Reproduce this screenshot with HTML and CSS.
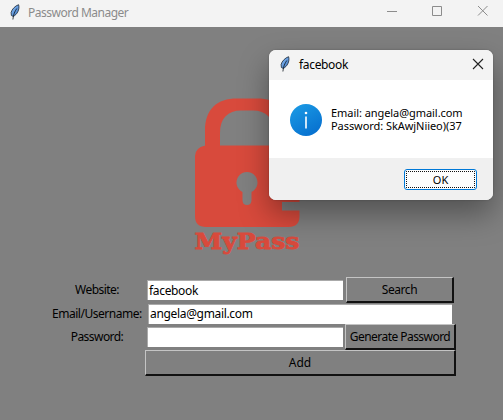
FILE: index.html
```html
<!DOCTYPE html>
<html lang="en">
<head>
<meta charset="utf-8">
<title>Password Manager</title>
<link rel="stylesheet" href="styles.css">
</head>
<body>
<svg class="defs" width="0" height="0">
  <defs>
    <linearGradient id="vane" x1="0" y1="0" x2="1" y2="1"><stop offset="0" stop-color="#8dc0f8"/><stop offset="1" stop-color="#3f78c4"/></linearGradient>
    <linearGradient id="blue" x1="0" y1="0" x2="0.6" y2="1"><stop offset="0" stop-color="#1c9de6"/><stop offset="1" stop-color="#0872d0"/></linearGradient>
    <symbol id="feather" viewBox="0 0 10 16">
      <path d="M8.600.7C5.200 1.800 1.800 5.300 1.100 8.500L1.400 11.500l1.900.9C7 10.600 10 5.500 8.600.7Z" fill="url(#vane)" stroke="#1c2836" stroke-width=".8"/>
      <path d="M6.800 4.500C4.800 7.500 3.400 10 2.900 15.500" fill="none" stroke="#101820" stroke-width=".8"/>
    </symbol>
  </defs>
</svg>
<div class="window">
  <header class="titlebar">
    <svg class="feather"><use href="#feather"/></svg>
    <span class="title"><span>Password Manager</span></span>
    <svg class="controls" width="104" height="14" viewBox="0 0 104 14" fill="none" stroke="#8c8c8c">
      <path d="M2 6.500h10M47.500 1.500h9v9h-9zM93 1l9.500 9.500M102.500 1l-9.500 9.500"/>
    </svg>
  </header>
  <main class="content">
    <svg class="logo" width="110" height="162" viewBox="192 96 110 162">
      <path fill="#d84a3c" fill-rule="evenodd" d="M205 147V131C205 109 217 98.500 237 98.500H257C277 98.500 289 109 289 131V145.500C296 146 299.500 150 299.500 156V202H282V210.500H299.500V216Q299.500 227 288.500 227H206Q195 227 195 216V156Q195 148 205 145.500ZM220 145.500H274V133C274 118 266 110.500 253 110.500H241C228 110.500 220 118 220 133ZM242.500 192V200Q242.500 205 247 205T251.500 200V192A10.500 10.500 0 1 0 242.500 192Z"/>
      <text class="brand" x="194.500" y="248.500" textLength="105" lengthAdjust="spacingAndGlyphs">MyPass</text>
    </svg>
    <form class="form">
      <div class="row"><label><span class="w-site">Website:</span></label><div class="entry"><span>facebook</span></div><div class="button search"><span>Search</span></div></div>
      <div class="row email"><label><span class="w-mail">Email/Username:</span></label><div class="entry wide"><span>angela@gmail.com</span></div></div>
      <div class="row"><label><span class="w-pass">Password:</span></label><div class="entry"></div><div class="button generate"><span>Generate Password</span></div></div>
      <div class="row"><label></label><div class="button add"><span>Add</span></div></div>
    </form>
  </main>
</div>
<section class="dialog">
  <header class="dialog-title">
    <svg class="feather"><use href="#feather"/></svg>
    <span class="title">facebook</span>
    <svg class="close" width="12" height="12" viewBox="0 0 12 12" stroke="#222" stroke-width="1.1"><path d="M1 1l10 10M11 1L1 11"/></svg>
  </header>
  <div class="dialog-body">
    <svg width="32" height="32" viewBox="0 0 32 32"><circle cx="16" cy="16" r="16" fill="url(#blue)"/><circle cx="16" cy="9" r="1.300" fill="#fff"/><path d="M16 12.500V24.500" stroke="#fff" stroke-width="1.600"/></svg>
    <p><span class="line-mail">Email: angela@gmail.com</span><br><span class="line-pass">Password: SkAwjNiieo)(37</span></p>
  </div>
  <footer class="dialog-footer"><div class="ok"><span>OK</span></div></footer>
</section>
</body>
</html>
```
FILE: styles.css
```css
* { box-sizing: border-box; }
body { margin: 0; width: 503px; height: 420px; overflow: hidden; font: 12px "Noto Sans", sans-serif; color: #000; }
.defs { position: absolute; }
.window { width: 503px; height: 420px; display: flex; flex-direction: column; background: #808080; }
.titlebar { height: 27px; flex: none; background: #f3f3f3; display: flex; align-items: center; padding: 0 14px 3px 10px; color: #8b8b8b; }
.feather { width: 10px; height: 16px; flex: none; }
.titlebar .title { margin-left: 8px; flex: 1; letter-spacing: -.5px; }
.content { flex: 1; display: flex; flex-direction: column; padding-top: 69px; }
.logo { display: block; margin-left: 192px; flex: none; }
.brand { font: bold 23px "DejaVu Serif", serif; fill: #d84a3c; stroke: #d84a3c; stroke-width: .8px; }
.form { margin: 19px 0 0 49px; width: 407px; }
.row { display: flex; height: 26px; align-items: center; }
.row.email { height: 21px; }
.row label { width: 96px; flex: none; text-align: center; white-space: nowrap; padding-bottom: 1px; letter-spacing: -.55px; }
.row.email label { text-align: left; padding-left: 3px; letter-spacing: -.47px; }
.entry { width: 196px; height: 20px; margin-left: 2px; background: #fff; border: 1px solid #aaa; border-width: 1px 0 0 1px; display: flex; align-items: center; padding: 0 0 1px 1px; white-space: nowrap; letter-spacing: -.33px; }
.entry.wide { width: 304px; margin-left: 3px; }
.button { height: 26px; display: flex; align-items: center; justify-content: center; border: solid; border-width: 1px 2px 2px 1px; border-color: #c4c4c4 #111 #111 #c4c4c4; white-space: nowrap; letter-spacing: -.55px; }
.search { width: 108px; margin-left: 3px; letter-spacing: -.45px; }
.generate { width: 111px; margin-left: 2px; }
.add { width: 311px; letter-spacing: 0; }
.dialog { position: absolute; left: 269px; top: 50px; width: 224px; height: 150px; border-radius: 7px; overflow: hidden; background: #fff; box-shadow: 0 14px 30px rgba(0,0,0,.36), 0 0 2px rgba(0,0,0,.25); }
.dialog-title { height: 30px; background: #f3f3f3; display: flex; align-items: center; padding: 0 9px 2px 11px; }
.dialog-title .title { margin-left: 9px; flex: 1; letter-spacing: -.33px; }
.dialog-body { height: 78px; display: flex; align-items: center; padding: 1px 0 0 21px; gap: 9px; }
.dialog-body p { margin: 0; padding-bottom: 2px; font-size: 11px; line-height: 13px; white-space: nowrap; letter-spacing: -.06px; }
.dialog-footer { height: 42px; background: #f0f0f0; display: flex; align-items: center; justify-content: flex-end; padding-right: 16px; }
.ok { width: 73px; height: 21px; border: 1px solid #0078d7; border-radius: 3px; background: #fdfdfd; outline: 1px dotted #111; outline-offset: -3px; display: flex; align-items: center; justify-content: center; font-size: 11px; }
```
